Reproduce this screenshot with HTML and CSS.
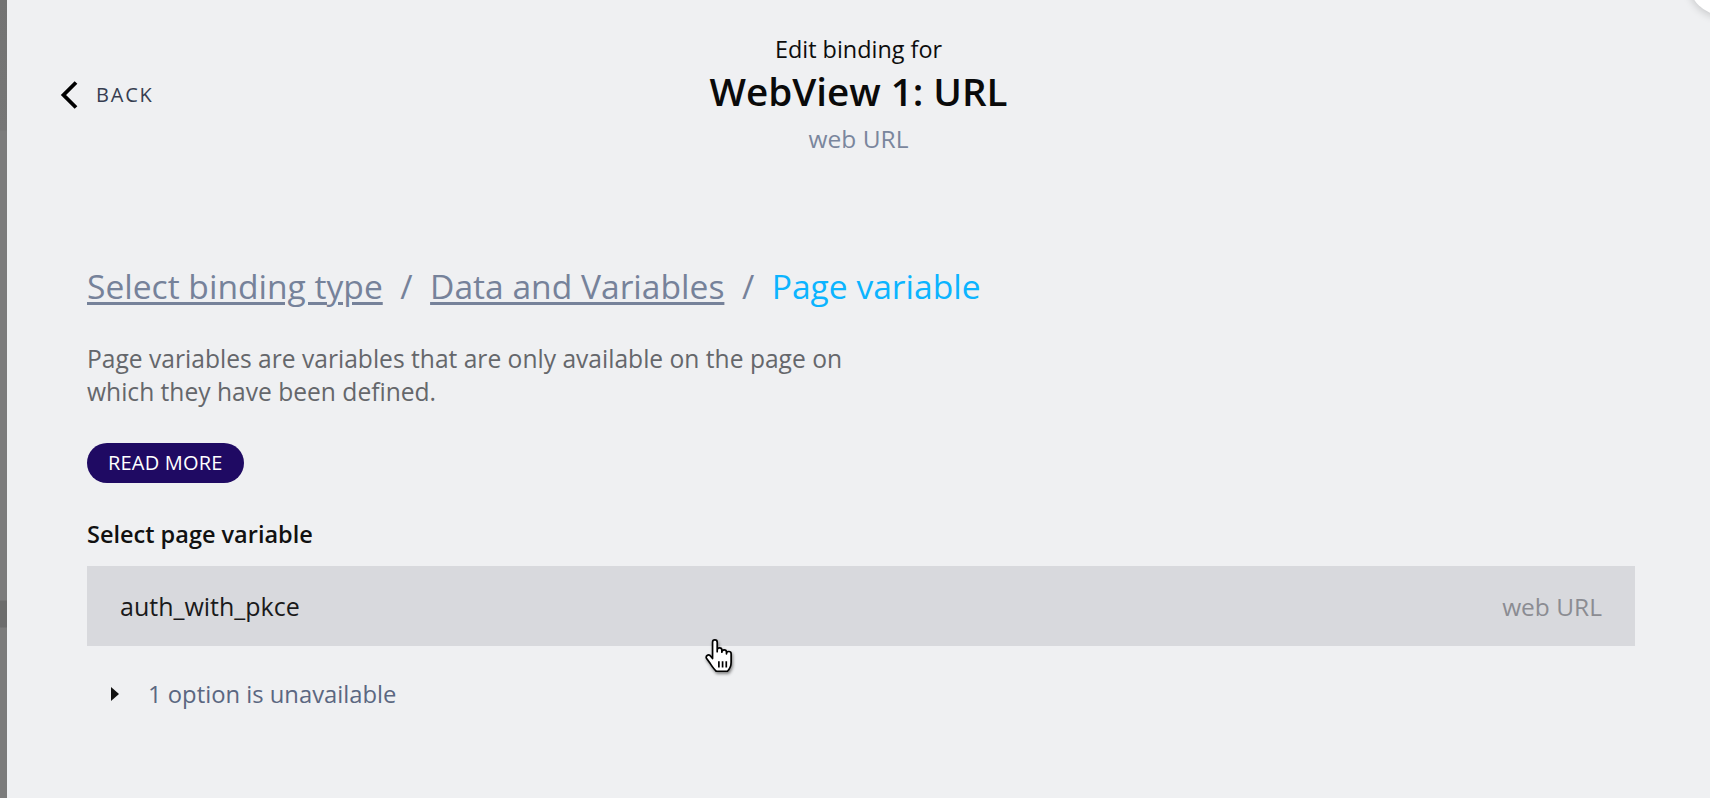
FILE: index.html
```html
<!DOCTYPE html>
<html lang="en">
<head>
<meta charset="utf-8">
<title>Edit binding for WebView 1: URL</title>
<link rel="stylesheet" href="styles.css">
</head>
<body>
<div class="strip"></div>
<main class="panel">
  <header class="header">
    <a class="back" href="#">
      <svg class="back-icon" width="20" height="28" viewBox="0 0 20 28" aria-hidden="true">
        <path d="M17 1.5 L4.5 14 L17 26.5" fill="none" stroke="#000" stroke-width="3.8" stroke-linejoin="miter"/>
      </svg>
      <span class="back-label">BACK</span>
    </a>
    <div class="heading">
      <div class="heading-pre">Edit binding for</div>
      <h1 class="heading-title">WebView 1: URL</h1>
      <div class="heading-sub">web URL</div>
    </div>
    <div class="header-spacer"></div>
  </header>

  <section class="content">
    <nav class="crumbs">
      <a class="crumb-link" href="#">Select binding type</a>
      <span class="crumb-sep">/</span>
      <a class="crumb-link" href="#">Data and Variables</a>
      <span class="crumb-sep">/</span>
      <span class="crumb-current">Page variable</span>
    </nav>

    <p class="desc">Page variables are variables that are only available on the page on which they have been defined.</p>

    <button class="read-more" type="button">READ MORE</button>

    <div class="field-label">Select page variable</div>

    <div class="option">
      <span class="option-name">auth_with_pkce</span>
      <span class="option-type">web URL</span>
    </div>

    <div class="unavailable">
      <span class="caret"></span>
      <span class="unavailable-text">1 option is unavailable</span>
    </div>
  </section>

  <svg class="cursor" width="36" height="38" viewBox="0 0 34 36" aria-hidden="true">
    <path d="M9 16 V4 a2.2 2.2 0 0 1 4.4 0 V13 V11.5 a2.2 2.2 0 0 1 4.4 0 V13.5 a2.2 2.2 0 0 1 4.4 0 V15 a2.2 2.2 0 0 1 4.4 0 V23 c0 4 -1.5 6.5 -3.5 8.5 H12.5 c-2 -1.8 -3.5 -4 -5.5 -7 L3.2 19.2 a2.2 2.2 0 0 1 3.4 -2.6 L9 19.5 Z" fill="#fff" stroke="#000" stroke-width="1.6" stroke-linejoin="round"/>
    <path d="M15 22 V28 M18.5 22 V28 M22 22 V28" stroke="#000" stroke-width="1.6"/>
  </svg>
  <div class="corner-dot"></div>
</main>
</body>
</html>
```
FILE: styles.css
```css
html, body {
  margin: 0;
  height: 100%;
}

body {
  display: flex;
  background: #eff0f2;
  font-family: "Open Sans", "Liberation Sans", sans-serif;
  color: #111;
  overflow: hidden;
}

.strip {
  width: 7px;
  flex: none;
  background: linear-gradient(#737373 0, #767676 130px, #7c7c7c 131px, #7c7c7c 600px, #6c6c6c 601px, #6c6c6c 627px, #7b7b7b 628px);
}

.panel {
  flex: 1;
  position: relative;
  min-width: 0;
}

/* header */
.header {
  display: grid;
  grid-template-columns: 1fr auto 1fr;
  align-items: center;
  padding-top: 35px;
}

.back {
  justify-self: start;
  display: flex;
  align-items: center;
  gap: 17px;
  margin-left: 52px;
  text-decoration: none;
  color: #363d50;
}

.back-icon {
  display: block;
}

.back-label {
  font-size: 20px;
  line-height: 26px;
  letter-spacing: 1.8px;
}

.heading {
  text-align: center;
}

.heading-pre {
  font-size: 23.4px;
  line-height: 28px;
  color: #0d0d0d;
}

.heading-title {
  margin: 6px 0 0;
  font-size: 38.6px;
  line-height: 44px;
  font-weight: 600;
  color: #0a0a0a;
}

.heading-sub {
  margin-top: 11px;
  font-size: 24.5px;
  line-height: 30px;
  color: #7a869d;
}

/* content */
.content {
  padding: 0 75px 0 80px;
  display: flex;
  flex-direction: column;
  align-items: flex-start;
}

.crumbs {
  margin-top: 112px;
  display: flex;
  align-items: baseline;
  gap: 17.5px;
  font-size: 33.6px;
  line-height: 40px;
}

.crumb-link {
  color: #76829a;
  text-decoration: underline;
  text-decoration-thickness: 2.5px;
  text-underline-offset: 3px;
}

.crumb-sep {
  color: #76829a;
}

.crumb-current {
  color: #0bb4ff;
}

.desc {
  margin: 36px 0 0;
  max-width: 780px;
  font-size: 24.6px;
  line-height: 33px;
  color: #65676b;
}

.read-more {
  margin-top: 35px;
  height: 40px;
  padding: 0 21px;
  border: none;
  border-radius: 20px;
  background: #1f0a63;
  color: #fff;
  font-family: inherit;
  font-size: 20px;
  font-weight: 400;
  letter-spacing: 0.2px;
  line-height: 40px;
}

.field-label {
  margin-top: 37px;
  font-size: 23.5px;
  line-height: 28px;
  font-weight: 600;
  color: #111;
}

.option {
  margin-top: 18px;
  align-self: stretch;
  height: 80px;
  padding: 0 33px;
  display: flex;
  align-items: center;
  justify-content: space-between;
  background: #d8d9dd;
}

.option-name {
  font-size: 25px;
  color: #1a1a1a;
}

.option-type {
  font-size: 24.5px;
  color: #8b8c92;
}

.unavailable {
  margin-top: 34px;
  padding-left: 24px;
  display: flex;
  align-items: center;
  gap: 29px;
  line-height: 28px;
}

.caret {
  width: 0;
  height: 0;
  border-left: 8px solid #111;
  border-top: 7px solid transparent;
  border-bottom: 7px solid transparent;
}

.unavailable-text {
  font-size: 23.8px;
  color: #5b6781;
}

/* overlays */
.cursor {
  position: absolute;
  left: 696px;
  top: 638px;
  filter: drop-shadow(1px 2px 1.5px rgba(0, 0, 0, 0.45));
}

.corner-dot {
  position: absolute;
  left: 1682px;
  top: -51px;
  width: 66px;
  height: 66px;
  border-radius: 50%;
  background: #fff;
  box-shadow: 0 2px 8px rgba(0, 0, 0, 0.18);
}
```
